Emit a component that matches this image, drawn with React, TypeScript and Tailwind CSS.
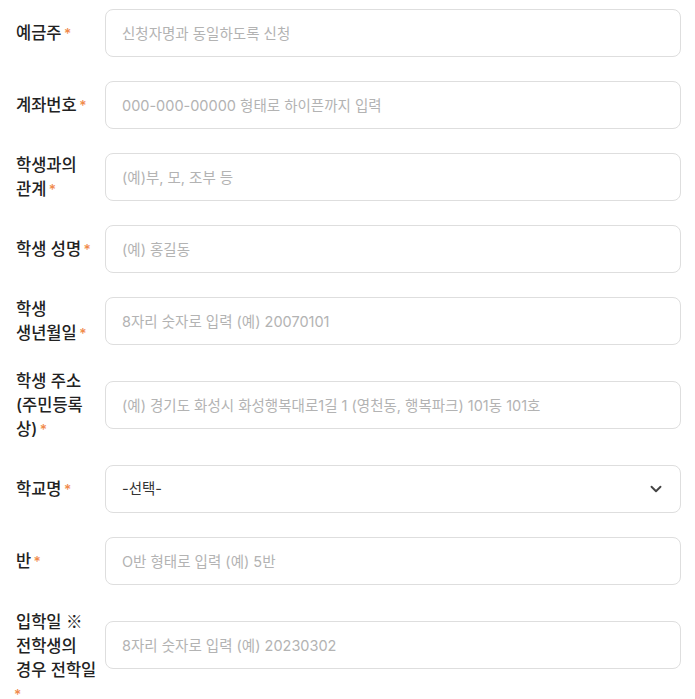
import React from "react";
import { ChevronDown } from "lucide-react";

const font = { fontFamily: "Inter, 'Noto Sans CJK KR', sans-serif" };

type Field = { label: React.ReactNode; key: string; placeholder?: string; select?: boolean; tall?: boolean };

const fields: Field[] = [
  { key: "holder", label: "예금주", placeholder: "신청자명과 동일하도록 신청" },
  { key: "account", label: "계좌번호", placeholder: "000-000-00000 형태로 하이픈까지 입력" },
  { key: "relation", label: "학생과의 관계", placeholder: "(예)부, 모, 조부 등" },
  { key: "name", label: "학생 성명", placeholder: "(예) 홍길동" },
  { key: "birth", label: "학생 생년월일", placeholder: "8자리 숫자로 입력 (예) 20070101" },
  { key: "addr", label: "학생 주소 (주민등록 상)", placeholder: "(예) 경기도 화성시 화성행복대로1길 1 (영천동, 행복파크) 101동 101호" },
  { key: "school", label: "학교명", select: true },
  { key: "class", label: "반", placeholder: "O반 형태로 입력 (예) 5반" },
  {
    key: "entry",
    label: (
      <>
        입학일 <span style={{ fontFamily: "'Noto Sans CJK KR', sans-serif" }}>※</span> 전학생의 경우 전학일
      </>
    ),
    placeholder: "8자리 숫자로 입력 (예) 20230302",
    tall: true,
  },
];

export default function App() {
  return (
    <div className="min-h-screen bg-white pt-[9px] pl-4 pr-[14px]" style={font}>
      <div className="flex flex-col gap-6">
        {fields.map((f) => (
          <div key={f.key} className="flex items-center">
            <div
              className={`w-[86px] shrink-0 break-keep text-[16.5px] font-medium leading-6 text-[#222] ${f.tall ? "h-[72px]" : ""}`}
            >
              {f.label} <span className="ml-[-2px] text-[14px] leading-none text-[#f08a4b]">*</span>
            </div>
            <div className="ml-[3px] flex-1">
              {f.select ? (
                <div className="flex h-12 items-center justify-between rounded-lg border border-[#dedede] pl-4 pr-[15px] text-[14.5px] text-[#333]">
                  <span>-선택-</span>
                  <ChevronDown size={18} strokeWidth={2.5} className="text-[#444]" />
                </div>
              ) : (
                <input
                  className="h-12 w-full rounded-lg border border-[#dedede] px-4 text-[14.5px] text-[#333] outline-none placeholder:text-[#b3b3b3]"
                  placeholder={f.placeholder}
                />
              )}
            </div>
          </div>
        ))}
      </div>
    </div>
  );
}
